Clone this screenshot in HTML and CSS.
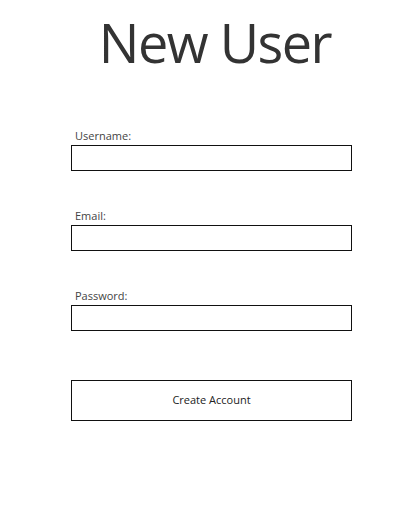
FILE: index.html
```html
<!DOCTYPE html>
<html>
<head>
<meta charset="utf-8">
<link rel="stylesheet" href="styles.css">
</head>
<body>
<h1 class="title">New User</h1>
<form class="form">
  <div class="field">
    <label class="label">Username:</label>
    <input class="input" type="text">
  </div>
  <div class="field">
    <label class="label">Email:</label>
    <input class="input" type="text">
  </div>
  <div class="field">
    <label class="label">Password:</label>
    <input class="input" type="password">
  </div>
  <button class="button" type="button">Create Account</button>
</form>
</body>
</html>
```
FILE: styles.css
```css
html, body {
  margin: 0;
  padding: 0;
  background: #fff;
}
body {
  font-family: "Open Sans", "Noto Sans", sans-serif;
  color: #333;
  width: 402px;
}
.title {
  margin: 0;
  padding: 9px 0 0 28px;
  font-size: 54px;
  font-weight: 400;
  line-height: 67px;
  letter-spacing: -1.5px;
  text-align: center;
  color: #333;
}
.form {
  margin: 53px 0 0 71px;
  width: 281px;
  display: flex;
  flex-direction: column;
}
.field {
  display: flex;
  flex-direction: column;
  margin-bottom: 38px;
}
.label {
  display: block;
  height: 16px;
  box-sizing: border-box;
  padding: 0 0 3px 4px;
  font-size: 11px;
  line-height: 13px;
  color: #444;
}
.input {
  box-sizing: border-box;
  margin: 0;
  height: 26px;
  width: 281px;
  border: 1px solid #111;
  border-radius: 0;
  padding: 0 4px;
  background: #fff;
  outline: none;
}
.button {
  box-sizing: border-box;
  margin: 11px 0 0 0;
  width: 281px;
  height: 41px;
  border: 1px solid #111;
  border-radius: 0;
  background: #fff;
  font-family: "Open Sans", "Noto Sans", sans-serif;
  font-size: 11px;
  color: #222;
  padding: 0 0 2px 0;
}
```
